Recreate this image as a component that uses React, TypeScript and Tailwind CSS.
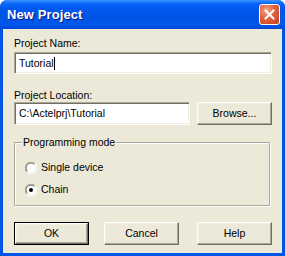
import React, { useState } from 'react';

const font = "font-['Liberation_Sans',Arial,sans-serif]";

const RadioDot: React.FC<{ checked: boolean }> = ({ checked }) => (
  <svg width="12" height="12" viewBox="0 0 12 12" className="shrink-0">
    <circle cx="6" cy="6" r="5.5" fill="#ffffff" />
    {/* outer etched ring */}
    <path d="M10.2 1.8 A5.5 5.5 0 0 0 1.8 10.2" stroke="#aca899" strokeWidth="1" fill="none" />
    <path d="M1.8 10.2 A5.5 5.5 0 0 0 10.2 1.8" stroke="#ffffff" strokeWidth="1" fill="none" />
    <path d="M9.5 2.5 A4.5 4.5 0 0 0 2.5 9.5" stroke="#716f64" strokeWidth="1" fill="none" />
    <path d="M2.5 9.5 A4.5 4.5 0 0 0 9.5 2.5" stroke="#f1efe2" strokeWidth="1" fill="none" />
    {checked && <circle cx="6" cy="6" r="2" fill="#000000" />}
  </svg>
);

const ClassicButton: React.FC<{ label: string; isDefault?: boolean; className?: string }> = ({
  label,
  isDefault,
  className = '',
}) => (
  <div className={`h-[23px] w-[75px] ${isDefault ? 'border border-black' : ''} ${className}`}>
    <div
      className={`h-full w-full flex items-center justify-center bg-[#ece9d8] border border-t-white border-l-white border-r-[#716f64] border-b-[#716f64] shadow-[inset_-1px_-1px_0_#aca899,inset_1px_1px_0_#f1efe2] text-black`}
    >
      {label}
    </div>
  </div>
);

const sunken =
  'bg-white border border-t-[#aca899] border-l-[#aca899] border-r-white border-b-white shadow-[inset_1px_1px_0_#716f64,inset_-1px_-1px_0_#f1efe2]';

export default function App() {
  const [mode, setMode] = useState<'single' | 'chain'>('chain');

  return (
    <div className={`w-[285px] h-[256px] bg-white ${font}`}>
      <div className="w-full h-full flex flex-col rounded-t-[7px] bg-[#0055e5] overflow-hidden">
        {/* Title bar */}
        <div className="h-[29px] shrink-0 flex items-center pl-[7px] pr-[5px] bg-[linear-gradient(to_bottom,#3d95ff_0%,#0a66f6_12%,#0058ee_30%,#0054e3_60%,#0057ec_85%,#0047d6_100%)]">
          <span className="text-white font-bold text-[13px] [text-shadow:1px_1px_#0a1883] tracking-[0.1px]">
            New Project
          </span>
          <div className="ml-auto mr-0 w-[21px] h-[21px] rounded-[3px] border border-white bg-[radial-gradient(circle_at_35%_30%,#f2a78c_0%,#e2613c_45%,#c8401c_100%)] flex items-center justify-center">
            <svg width="11" height="11" viewBox="0 0 11 11">
              <path d="M1.5 1.5 L9.5 9.5 M9.5 1.5 L1.5 9.5" stroke="#ffffff" strokeWidth="2" strokeLinecap="square" />
            </svg>
          </div>
        </div>

        {/* Body */}
        <div className="flex-1 mx-[3px] mb-[3px] bg-[#ece9d8] pl-[11px] pr-[10px] pt-[8px] flex flex-col text-[10.5px] leading-[13px] text-black">
          <label>Project Name:</label>
          <div className={`mt-[2px] h-[22px] w-full flex items-center pl-[4px] ${sunken}`}>
            <span>Tutorial</span>
            <span className="w-px h-[13px] bg-black" />
          </div>

          <label className="mt-[15px]">Project Location:</label>
          <div className="flex items-center gap-[7px]">
            <div className={`h-[23px] w-[176px] flex items-center pl-[4px] ${sunken}`}>
              C:\Actelprj\Tutorial
            </div>
            <ClassicButton label="Browse..." />
          </div>

          <fieldset className="mt-[11px] mr-[2px] border border-[#aca899] shadow-[1px_1px_0_#ffffff,inset_1px_1px_0_#ffffff] px-[7px] pb-[9px]">
            <legend className="px-[1px] bg-[#ece9d8]">Programming mode</legend>
            <div className="flex flex-col gap-[9px] mt-[12px] ml-[3px]">
              <div className="flex items-center gap-[4px] cursor-default" onClick={() => setMode('single')}>
                <RadioDot checked={mode === 'single'} />
                <span>Single device</span>
              </div>
              <div className="flex items-center gap-[4px] cursor-default" onClick={() => setMode('chain')}>
                <RadioDot checked={mode === 'chain'} />
                <span>Chain</span>
              </div>
            </div>
          </fieldset>

          <div className="mt-[16px] flex items-center">
            <ClassicButton label="OK" isDefault />
            <ClassicButton label="Cancel" className="ml-[15px]" />
            <ClassicButton label="Help" className="ml-[18px]" />
          </div>
        </div>
      </div>
    </div>
  );
}
